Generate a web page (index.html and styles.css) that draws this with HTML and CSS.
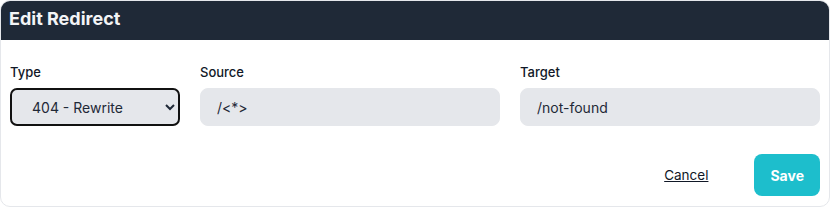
FILE: index.html
```html
<!DOCTYPE html>
<html lang="en">
<head>
  <meta charset="UTF-8">
  <meta name="viewport" content="width=device-width, initial-scale=1.0">
  <title>Edit Redirect</title>
  <link rel="stylesheet" href="styles.css">
</head>
<body>
<div class="modal">
  <div class="modal-header">Edit Redirect</div>
  <div class="modal-body">
    <div class="field">
      <label for="type">Type</label>
      <select id="type" class="type-select">
        <option>404 - Rewrite</option>
        <option>301 - Redirect</option>
        <option>302 - Redirect</option>
      </select>
    </div>
    <div class="field">
      <label for="source">Source</label>
      <input id="source" class="text-input" type="text" value="/<*>">
    </div>
    <div class="field">
      <label for="target">Target</label>
      <input id="target" class="text-input" type="text" value="/not-found">
    </div>
  </div>
  <div class="modal-footer">
    <a href="#" class="cancel">Cancel</a>
    <button class="save">Save</button>
  </div>
</div>
</body>
</html>
```
FILE: styles.css
```css
body {
  margin: 0;
  font-family: Inter, "Noto Sans", sans-serif;
  background: #fff;
  color: #111827;
}

.modal {
  width: 830px;
  height: 207px;
  box-sizing: border-box;
  border: 1px solid #e5e7eb;
  border-radius: 10px;
  overflow: hidden;
  background: #fff;
}

.modal-header {
  background: #1f2937;
  color: #f3f4f6;
  font-size: 18px;
  font-weight: 700;
  height: 40px;
  line-height: 38px;
  padding: 0 9px;
  margin: -1px -1px 0;
}

.modal-body {
  display: grid;
  grid-template-columns: 170px 1fr 1fr;
  gap: 20px;
  padding: 22px 9px 0;
}

.field {
  display: flex;
  flex-direction: column;
}

.field label {
  font-size: 13px;
  font-weight: 500;
  color: #111827;
  height: 20px;
  line-height: 20px;
  margin-bottom: 6px;
}

.type-select {
  height: 38px;
  border: 2px solid #111;
  border-radius: 7px;
  background: #e5e7eb;
  font-family: Inter, "Noto Sans", sans-serif;
  font-size: 14px;
  color: #1f2937;
  padding: 0 12px 0 16px;
  outline: none;
}

.text-input {
  height: 38px;
  box-sizing: border-box;
  border: 1px solid #e5e7eb;
  border-radius: 8px;
  background: #e5e7eb;
  font-family: Inter, "Noto Sans", sans-serif;
  font-size: 14px;
  color: #1f2937;
  padding: 0 16px;
  outline: none;
}

.modal-footer {
  display: flex;
  justify-content: flex-end;
  align-items: center;
  gap: 46px;
  padding: 28px 9px 0;
}

.cancel {
  font-size: 13.5px;
  color: #111827;
  text-decoration: underline;
}

.save {
  height: 42px;
  padding: 0 16px;
  border: none;
  border-radius: 8px;
  background: #1dbecc;
  color: #fff;
  font-family: Inter, "Noto Sans", sans-serif;
  font-size: 14px;
  font-weight: 700;
}
```
